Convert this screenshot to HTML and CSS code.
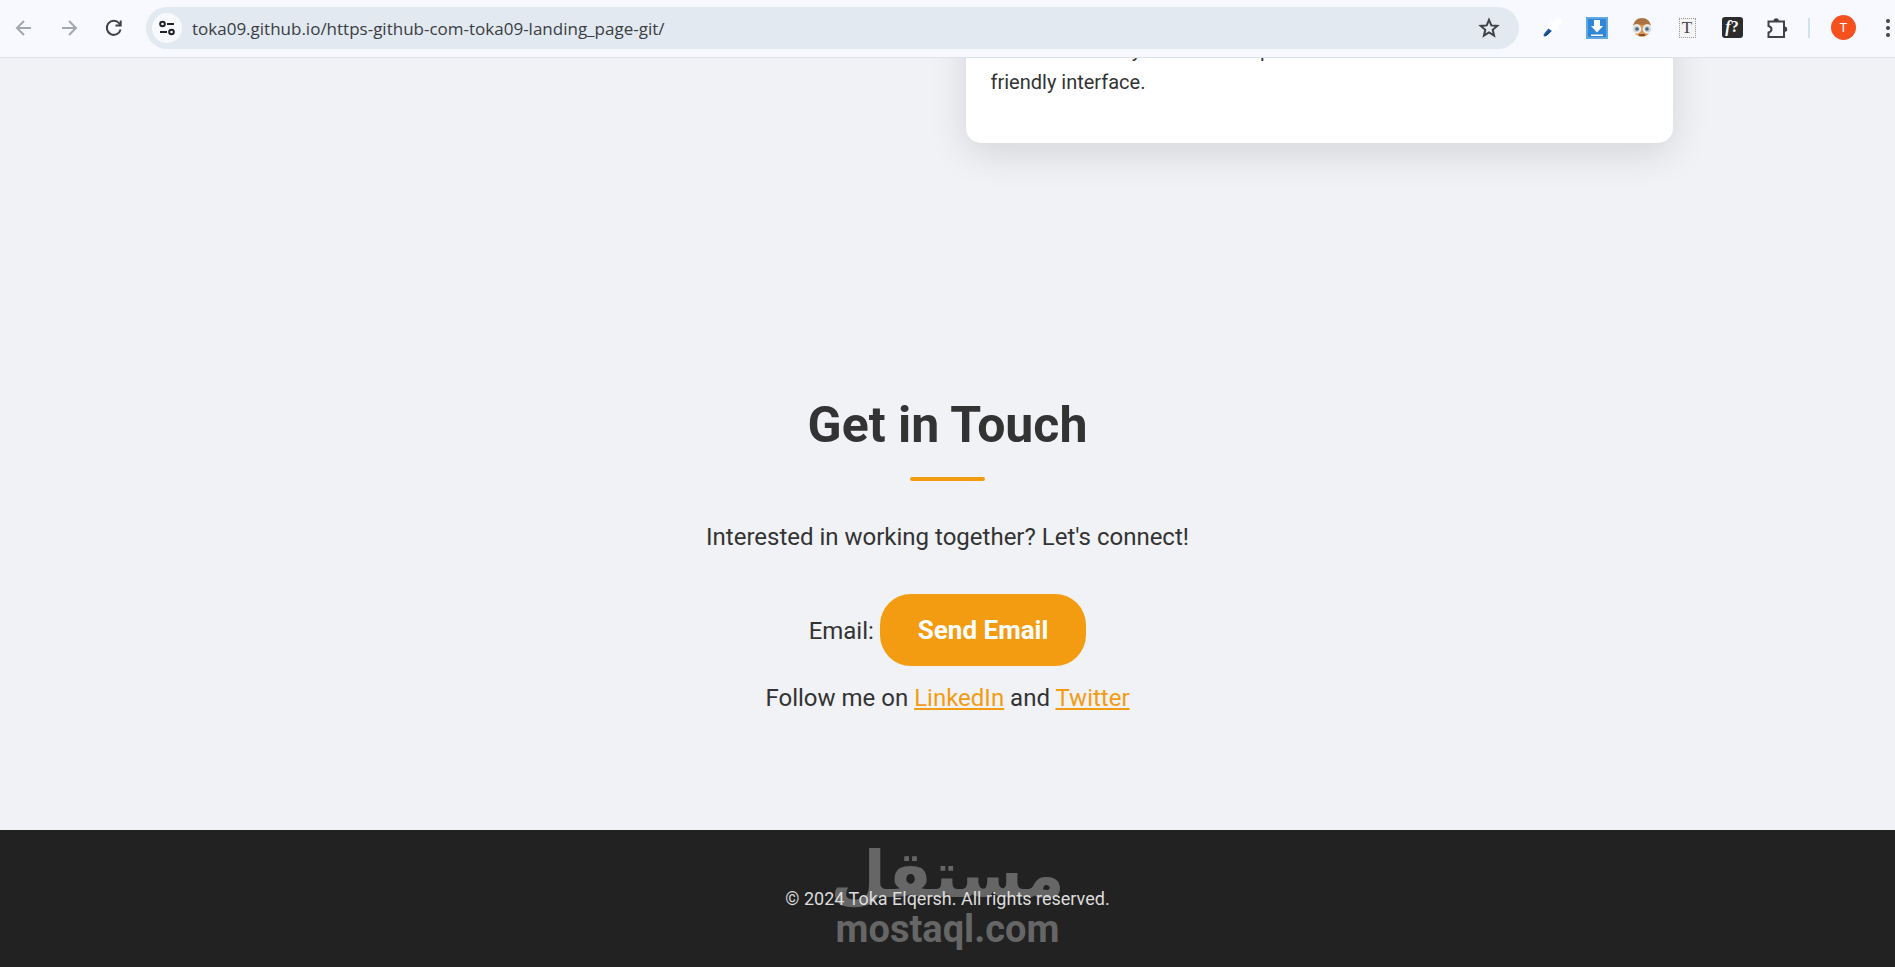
FILE: index.html
```html
<!DOCTYPE html>
<html lang="en">
<head>
    <meta charset="UTF-8">
    <meta name="viewport" content="width=device-width, initial-scale=1.0">
    <title>Toka Elqersh</title>
    <link rel="stylesheet" href="styles.css">
</head>
<body>
    <!-- Browser toolbar -->
    <header class="toolbar">
        <div class="nav-buttons">
            <button class="icon-btn muted" aria-label="Back">
                <svg width="20" height="20" viewBox="0 0 20 20"><path d="M17 10H3.500M10 3L3 10l7 7" /></svg>
            </button>
            <button class="icon-btn muted" aria-label="Forward">
                <svg width="20" height="20" viewBox="0 0 20 20"><path d="M3 10h13.500M10 3l7 7-7 7" /></svg>
            </button>
            <button class="icon-btn" aria-label="Reload">
                <svg width="20" height="20" viewBox="0 0 20 20"><path d="M16.600 11.500A7 7 0 1 1 15.300 5.500L16.500 7M16.700 2.500V7.500H11.500" /></svg>
            </button>
        </div>

        <div class="address-bar">
            <button class="site-info" aria-label="Site information">
                <svg width="18" height="18" viewBox="0 0 18 18">
                    <circle cx="4.500" cy="5" r="2.300" /><path d="M9 5h7" />
                    <circle cx="13.500" cy="13" r="2.300" /><path d="M2 13h7" />
                </svg>
            </button>
            <input class="url" type="text" aria-label="Address" value="toka09.github.io/https-github-com-toka09-landing_page-git/">
            <button class="icon-btn" aria-label="Bookmark">
                <svg class="star" width="22" height="22" viewBox="0 0 22 22"><path d="M11 2.800l2.300 5.600 6 .5-4.600 3.900 1.400 5.900-5.100-3.200-5.100 3.200 1.400-5.900L2.700 8.900l6-.5z" /></svg>
            </button>
        </div>

        <div class="extensions">
            <button class="icon-btn" aria-label="Color picker">
                <svg class="filled" width="22" height="22" viewBox="0 0 22 22">
                    <path fill="#fff" d="M1 20l1-4 7-8 1-3 3 1 3-5 4 1 1 3-4 4 1 3-4 1-8 7z" />
                    <path fill="#1c57a5" d="M3 19.500q-1-2 1-4l3.500-4 3 2.500-4 4q-1.500 1.500-3.500 1.500z" />
                    <path fill="#153e7c" d="M4 19l6-6 .5 1-4 4z" />
                </svg>
            </button>
            <button class="icon-btn" aria-label="Downloader">
                <svg class="filled" width="22" height="22" viewBox="0 0 22 22">
                    <rect x="1" y="1" width="20" height="20" fill="#2f86d6" stroke="#62a6e2" />
                    <path fill="#fff" d="M8 3h6v6h3l-6 6.500L5 9h3zM5 17.500h12v1.500H5z" />
                </svg>
            </button>
            <button class="icon-btn" aria-label="Profile face">
                <svg class="filled" width="22" height="22" viewBox="0 0 22 22">
                    <circle cx="11" cy="11" r="9" fill="#d99a5c" />
                    <path fill="#a97442" d="M2 9C3 4 6 1 11 1s8 3 9 8l-4-2-5 1-5-1z" />
                    <circle cx="5.500" cy="12" r="4" fill="#c9d4dc" stroke="#f2f2f2" stroke-width="1.500" />
                    <circle cx="16.500" cy="12" r="4" fill="#c9d4dc" stroke="#f2f2f2" stroke-width="1.500" />
                    <circle cx="6" cy="12" r="1.800" fill="#4c6579" />
                    <circle cx="16" cy="12" r="1.800" fill="#4c6579" />
                    <path stroke="#8a4e28" d="M8 18h6" />
                </svg>
            </button>
            <button class="icon-btn" aria-label="Text tool">
                <span class="type-icon">T</span>
            </button>
            <button class="icon-btn" aria-label="Font finder">
                <span class="font-icon"><i>f</i>?</span>
            </button>
            <button class="icon-btn" aria-label="Extensions">
                <svg class="puzzle" width="22" height="22" viewBox="0 0 22 22">
                    <path d="M2.500 4.500H18V20H2.500V15.500Q5.500 14.500 5.500 12.200T2.500 9z" />
                    <path class="knob" d="M7.500 4a2.700 2.700 0 0 1 5.400 0zM18.500 9.500a2.700 2.700 0 0 1 0 5.400z" />
                </svg>
            </button>
            <span class="divider"></span>
            <button class="avatar" aria-label="Account">T</button>
            <button class="icon-btn menu-btn" aria-label="Menu">
                <svg class="filled" width="6" height="20" viewBox="0 0 6 20"><circle cx="3" cy="3" r="2" /><circle cx="3" cy="10" r="2" /><circle cx="3" cy="17" r="2" /></svg>
            </button>
        </div>
    </header>

    <!-- Page, scrolled to the end -->
    <div class="page">
        <section class="projects">
            <article class="card">
                <p>Our food delivery web site template with a clean and modern but user-friendly interface.</p>
            </article>
        </section>

        <section class="contact">
            <h2>Get in Touch</h2>
            <p>Interested in working together? Let's connect!</p>
            <p class="email">Email: <a class="cta" href="#">Send Email</a></p>
            <p>Follow me on <a href="#">LinkedIn</a> and <a href="#">Twitter</a></p>
        </section>

        <footer>
            <p>© 2024 Toka Elqersh. All rights reserved.</p>
            <div class="watermark">
                <span class="brand" lang="ar" dir="rtl">مستقل</span>
                <span class="domain">mostaql.com</span>
            </div>
        </footer>
    </div>
</body>
</html>
```

FILE: styles.css
```css
* {
    box-sizing: border-box;
}

body {
    margin: 0;
    height: 100vh;
    display: flex;
    flex-direction: column;
    overflow: hidden;
    font-family: Roboto, Arial, sans-serif;
    color: #333;
    background-color: #f0f2f5;
}

button {
    border: none;
    padding: 0;
    background: none;
    cursor: pointer;
}

/* Browser toolbar */
.toolbar {
    display: flex;
    align-items: center;
    flex-shrink: 0;
    height: 58px;
    padding: 0 4px 2px 12px;
    background-color: #f8f9fe;
    border-bottom: 1px solid #dde1e8;
}

.nav-buttons {
    display: flex;
    gap: 21px;
    margin-right: 20px;
}

.icon-btn {
    display: flex;
    align-items: center;
    justify-content: center;
    width: 24px;
    height: 24px;
}

.icon-btn svg,
.site-info svg {
    fill: none;
    stroke: #3f4347;
    stroke-width: 2;
}

.icon-btn.muted svg {
    stroke: #a4a8ab;
}

.icon-btn .filled {
    fill: #3f4347;
    stroke: none;
}

.address-bar {
    flex: 1;
    display: flex;
    align-items: center;
    height: 42px;
    padding: 0 18px 0 6px;
    border-radius: 21px;
    background-color: #e2e9f1;
}

.site-info {
    display: flex;
    align-items: center;
    justify-content: center;
    width: 30px;
    height: 30px;
    border-radius: 50%;
    background-color: #f8f9fe;
}

.site-info svg {
    stroke: #1f2123;
}

.url {
    flex: 1;
    margin-left: 10px;
    padding: 2px 0 0;
    border: none;
    outline: none;
    background: none;
    font: 17px "Open Sans", "Noto Sans", sans-serif;
    color: #3a3d42;
}

.extensions {
    display: flex;
    align-items: center;
    gap: 21px;
    margin-left: 21px;
}

.type-icon {
    width: 17px;
    height: 20px;
    border: 1px dotted #999;
    background-color: #f4f4f4;
    font: 17px/18px "Liberation Serif", serif;
    color: #444;
}

.font-icon {
    width: 21px;
    height: 21px;
    border-radius: 3px;
    background-color: #2c2c2c;
    font: bold 16px/20px "Liberation Serif", serif;
    color: #fff;
}

.icon-btn .knob {
    fill: #3f4347;
    stroke: none;
}

.divider {
    width: 2px;
    height: 20px;
    margin-left: -2px;
    background-color: #cfe3ef;
}

.avatar {
    width: 25px;
    height: 25px;
    border-radius: 50%;
    background-color: #f4511e;
    font: 13px Roboto, sans-serif;
    color: #fff;
}

.menu-btn {
    width: 6px;
    margin-left: 8px;
}

/* Page */
.page {
    flex: 1;
    min-height: 0;
    display: flex;
    flex-direction: column;
    justify-content: flex-end;
    overflow: hidden;
}

.projects {
    display: grid;
    grid-template-columns: 1fr 1fr;
    gap: 36px;
    width: 100%;
    max-width: 1450px;
    margin: 0 auto;
    padding-bottom: 130px;
}

.card {
    grid-column: 2;
    padding: 25px 25px 45px;
    border-radius: 15px;
    background-color: #fff;
    box-shadow: 0 10px 38px rgba(0, 0, 0, 0.12);
}

.card p {
    margin: 0;
    font-size: 20px;
    line-height: 32px;
}

.contact {
    padding: 112px 25px 113px;
    text-align: center;
}

.contact h2 {
    margin: 0 0 37px;
    font-size: 50px;
    line-height: 80px;
}

.contact h2::after {
    content: "";
    display: block;
    width: 75px;
    height: 4px;
    margin: 12px auto 0;
    border-radius: 2px;
    background-color: #f39c12;
}

.contact p {
    margin: 0;
    font-size: 24px;
    line-height: 38px;
}

.contact .email {
    margin: 38px 0 13px;
}

.contact a {
    color: #f39c12;
}

.contact .cta {
    display: inline-block;
    padding: 17px 38px;
    border-radius: 31px;
    background-color: #f39c12;
    font-size: 26px;
    font-weight: bold;
    text-decoration: none;
    color: #fff;
}

/* Footer */
footer {
    position: relative;
    padding: 54px 25px;
    text-align: center;
    background-color: #222;
    color: #ddd;
}

footer p {
    position: relative;
    z-index: 1;
    margin: 0;
    font-size: 18px;
    line-height: 29px;
}

.watermark {
    position: absolute;
    inset: 0;
    display: flex;
    flex-direction: column;
    align-items: center;
    padding-top: 10px;
    font-weight: bold;
    color: #666;
    pointer-events: none;
}

.brand {
    font: bold 64px/70px "DejaVu Sans", sans-serif;
}

.domain {
    font-size: 38px;
    line-height: 38px;
}
```
